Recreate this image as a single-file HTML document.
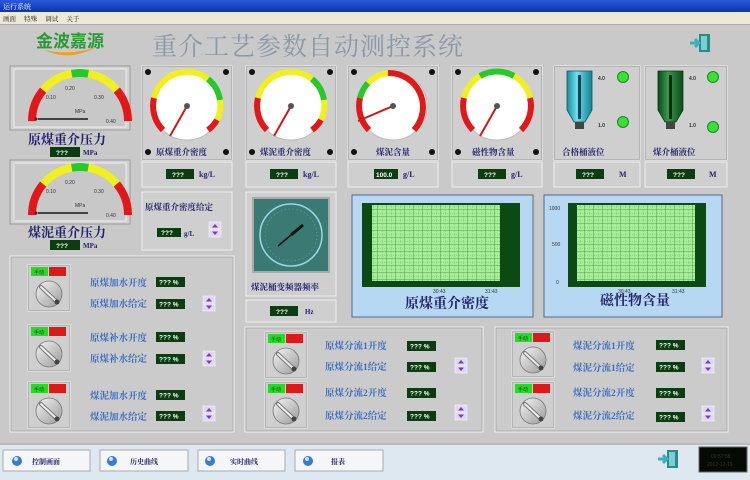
<!DOCTYPE html>
<html><head><meta charset="utf-8"><style>
html,body{margin:0;padding:0;width:750px;height:480px;overflow:hidden;background:#c9c9c9}
svg{display:block}
.t{font-family:"Liberation Serif","Noto Serif CJK SC",serif}
.lb{font-family:"Liberation Serif","Noto Serif CJK SC",serif;font-weight:bold;fill:#23236e}
.bl{font-family:"Liberation Serif","Noto Serif CJK SC",serif;fill:#3c6cc0;font-size:9.5px;font-weight:bold}
.v{font-family:"Liberation Sans",sans-serif;fill:#fff;font-size:6.5px;font-weight:bold}
.s{font-family:"Liberation Sans",sans-serif;fill:#333;font-size:5px}
</style></head><body>
<svg width="750" height="480" viewBox="0 0 750 480" xmlns="http://www.w3.org/2000/svg">
<defs>
<linearGradient id="tb" x1="0" y1="0" x2="0" y2="1"><stop offset="0" stop-color="#2a5ad8"/><stop offset="1" stop-color="#0a34b0"/></linearGradient>
<linearGradient id="kn" x1="0" y1="0" x2="1" y2="1"><stop offset="0" stop-color="#f4f4f4"/><stop offset="1" stop-color="#9a9a9a"/></linearGradient>
<linearGradient id="tk1" x1="0" y1="0" x2="1" y2="0"><stop offset="0" stop-color="#1a8a9a"/><stop offset=".4" stop-color="#6ae0f0"/><stop offset="1" stop-color="#168090"/></linearGradient>
<linearGradient id="tk2" x1="0" y1="0" x2="1" y2="0"><stop offset="0" stop-color="#0c4a1c"/><stop offset=".4" stop-color="#3a9a4a"/><stop offset="1" stop-color="#0c4a1c"/></linearGradient>
<pattern id="grid" width="9" height="7" patternUnits="userSpaceOnUse"><rect width="9" height="7" fill="#a6ee9a"/><path d="M9 0V7M0 7H9" stroke="#3e8a3a" stroke-width="0.8"/><path d="M4.5 0V7M0 3.5H9" stroke="#6ab860" stroke-width="0.4" stroke-dasharray="1 1"/></pattern>
<g id="knob">
<rect x="0" y="0" width="42" height="46" fill="#cfcfcf" stroke="#eee" stroke-width="1"/>
<rect x="0.5" y="0.5" width="41" height="45" fill="none" stroke="#999" stroke-width=".6"/>
<rect x="3" y="2" width="17" height="9" fill="#22dd22"/><text x="6" y="9" class="s" fill="#060">手动</text>
<rect x="21" y="2" width="17" height="9" fill="#dd1a1a"/>
<circle cx="21" cy="29" r="13" fill="url(#kn)" stroke="#777" stroke-width=".8"/>
<path d="M13 22 L28 36" stroke="#777" stroke-width="4" stroke-linecap="round"/>
<path d="M13 22 L28 36" stroke="#eee" stroke-width="2" stroke-linecap="round"/>
<circle cx="29" cy="37" r="2.5" fill="#444"/>
</g>
<g id="vbox"><rect x="0" y="0" width="29" height="10" fill="#0b3d10"/><text x="3" y="7.5" class="v">??? %</text></g>
<g id="arr"><rect x="0" y="0" width="12" height="7" fill="#e0d8f4" stroke="#fff" stroke-width=".5"/><path d="M3 5.5 L6 2 L9 5.5Z" fill="#7a3ac8"/><rect x="0" y="8" width="12" height="7" fill="#e0d8f4" stroke="#fff" stroke-width=".5"/><path d="M3 9.5 L6 13 L9 9.5Z" fill="#7a3ac8"/></g>
<g id="semi">
<rect x="0" y="0" width="120" height="64" fill="#d2d2d2" stroke="#9a9a9a"/>
<rect x="4" y="3" width="112" height="58" fill="#c8c8c8" stroke="#eee"/>
<path d="M22 55 A48 48 0 0 1 33.2 24.1" stroke="#e01818" stroke-width="8" fill="none"/>
<path d="M33.2 24.1 A48 48 0 0 1 61.7 7.7" stroke="#f0f020" stroke-width="8" fill="none"/>
<path d="M61.7 7.7 A48 48 0 0 1 78.3 7.7" stroke="#28c828" stroke-width="8" fill="none"/>
<path d="M78.3 7.7 A48 48 0 0 1 106.8 24.1" stroke="#f0f020" stroke-width="8" fill="none"/>
<path d="M106.8 24.1 A48 48 0 0 1 118 55" stroke="#e01818" stroke-width="8" fill="none"/>
<text x="55" y="24" class="s">0.20</text><text x="36" y="33" class="s">0.10</text><text x="84" y="33" class="s">0.30</text><text x="65" y="47" class="s">MPa</text><text x="96" y="57" class="s">0.40</text>
<path d="M28 53 H78" stroke="#444" stroke-width="2"/><circle cx="26" cy="53" r="1.5" fill="#333"/>
</g>
<g id="rg">
<rect x="0" y="0" width="90" height="94" fill="#cfcfcf" stroke="#eee"/>
<rect x="0.5" y="0.5" width="89" height="93" fill="none" stroke="#999" stroke-width=".6"/>
<circle cx="6" cy="6" r="3" fill="#111"/><circle cx="84" cy="6" r="3" fill="#111"/><circle cx="6" cy="86" r="3" fill="#111"/><circle cx="84" cy="86" r="3" fill="#111"/>
<circle cx="45" cy="40" r="34" fill="#fff" stroke="#bbb"/>
</g>
</defs>

<!-- title bar & menu -->
<rect x="0" y="0" width="750" height="12" fill="url(#tb)"/>
<text x="3" y="9" class="t" font-size="7" fill="#fff">运行系统</text>
<rect x="0" y="12" width="750" height="12" fill="#ece9d8"/>
<text x="3" y="21" class="t" font-size="6.5" fill="#222">画面　 特殊　 调试　 关于</text>
<rect x="0" y="24" width="750" height="1" fill="#aaa"/>

<!-- logo -->
<text x="36" y="47" font-family="Liberation Sans,'Noto Sans CJK SC',sans-serif" font-weight="bold" font-size="17" fill="#2a9a34">金波嘉源</text>
<path d="M44 50 Q70 62 96 47 Q72 56 44 50Z" fill="#f0a020"/>
<!-- title -->
<text x="152" y="55" class="t" font-size="25" fill="#8a98a8" letter-spacing="1">重介工艺参数自动测控系统</text>
<!-- exit icon -->
<g transform="translate(690,33)"><rect x="9" y="1" width="11" height="18" fill="#2a8a8a"/><rect x="11" y="3" width="6" height="14" fill="#7ad0d0"/><path d="M0 10 H9 M5 6 L9 10 L5 14" stroke="#3ab0c0" stroke-width="3" fill="none"/></g>

<!-- semi gauges -->
<use href="#semi" transform="translate(10,66)"/>
<text x="28" y="144" class="lb" font-size="13">原煤重介压力</text>
<rect x="50" y="147" width="30" height="10" fill="#0b3d10"/><text x="56" y="155" class="v">???</text><text x="83" y="155" class="lb" font-size="7">MPa</text>
<use href="#semi" transform="translate(10,160)"/>
<text x="28" y="237" class="lb" font-size="13">煤泥重介压力</text>
<rect x="50" y="240" width="30" height="10" fill="#0b3d10"/><text x="56" y="248" class="v">???</text><text x="83" y="248" class="lb" font-size="7">MPa</text>

<!-- round gauges -->
<g transform="translate(142,66)"><use href="#rg"/>
<path d="M21 64 A34 34 0 0 1 12 32" stroke="#e01818" stroke-width="6" fill="none"/>
<path d="M12 32 A34 34 0 0 1 66 13" stroke="#f0f020" stroke-width="6" fill="none"/>
<path d="M66 13 A34 34 0 0 1 78 34" stroke="#28c828" stroke-width="6" fill="none"/>
<path d="M78 34 A34 34 0 0 1 75 54" stroke="#f0f020" stroke-width="6" fill="none"/>
<path d="M75 54 A34 34 0 0 1 66 64" stroke="#e01818" stroke-width="6" fill="none"/>
<path d="M45 40 L28 70" stroke="#d01818" stroke-width="2"/><circle cx="45" cy="40" r="3" fill="#555"/>
<text x="14" y="89" class="lb" font-size="8.5">原煤重介密度</text></g>
<g transform="translate(246,66)"><use href="#rg"/>
<path d="M21 64 A34 34 0 0 1 12 32" stroke="#e01818" stroke-width="6" fill="none"/>
<path d="M12 32 A34 34 0 0 1 66 13" stroke="#f0f020" stroke-width="6" fill="none"/>
<path d="M66 13 A34 34 0 0 1 78 34" stroke="#28c828" stroke-width="6" fill="none"/>
<path d="M78 34 A34 34 0 0 1 75 54" stroke="#f0f020" stroke-width="6" fill="none"/>
<path d="M75 54 A34 34 0 0 1 66 64" stroke="#e01818" stroke-width="6" fill="none"/>
<path d="M45 40 L28 70" stroke="#d01818" stroke-width="2"/><circle cx="45" cy="40" r="3" fill="#555"/>
<text x="14" y="89" class="lb" font-size="8.5">煤泥重介密度</text></g>
<g transform="translate(348,66)"><use href="#rg"/>
<path d="M21 64 A34 34 0 0 1 12 32" stroke="#e01818" stroke-width="6" fill="none"/>
<path d="M12 32 A34 34 0 0 1 20 17" stroke="#28c828" stroke-width="6" fill="none"/>
<path d="M20 17 A34 34 0 0 1 40 7" stroke="#f0f020" stroke-width="6" fill="none"/>
<path d="M40 7 A34 34 0 0 1 66 64" stroke="#e01818" stroke-width="6" fill="none"/>
<path d="M45 40 L10 55" stroke="#d01818" stroke-width="2"/><circle cx="45" cy="40" r="3" fill="#555"/>
<text x="28" y="89" class="lb" font-size="8.5">煤泥含量</text></g>
<g transform="translate(452,66)"><use href="#rg"/>
<path d="M21 64 A34 34 0 0 1 12 32" stroke="#e01818" stroke-width="6" fill="none"/>
<path d="M12 32 A34 34 0 0 1 28 10" stroke="#f0f020" stroke-width="6" fill="none"/>
<path d="M28 10 A34 34 0 0 1 62 10" stroke="#28c828" stroke-width="6" fill="none"/>
<path d="M62 10 A34 34 0 0 1 78 32" stroke="#f0f020" stroke-width="6" fill="none"/>
<path d="M78 32 A34 34 0 0 1 69 64" stroke="#e01818" stroke-width="6" fill="none"/>
<path d="M45 40 L28 70" stroke="#d01818" stroke-width="2"/><circle cx="45" cy="40" r="3" fill="#555"/>
<text x="20" y="89" class="lb" font-size="8.5">磁性物含量</text></g>

<!-- tanks -->
<g transform="translate(554,66)">
<rect x="0" y="0" width="86" height="94" fill="#cfcfcf" stroke="#eee"/><rect x=".5" y=".5" width="85" height="93" fill="none" stroke="#999" stroke-width=".6"/>
<path d="M13 5 H38 V44 L31 56 H20 L13 44Z" fill="url(#tk1)" stroke="#0a5a6a" stroke-width=".8"/>
<rect x="24" y="9" width="3" height="44" fill="#084050"/><rect x="21" y="56" width="9" height="7" fill="#444"/>
<text x="44" y="14" class="s" font-weight="bold">4.0</text><text x="44" y="61" class="s" font-weight="bold">1.0</text>
<circle cx="69" cy="11" r="5.5" fill="#38e038" stroke="#1a8a1a"/><circle cx="69" cy="56" r="5.5" fill="#38e038" stroke="#1a8a1a"/>
<text x="8" y="89" class="lb" font-size="8.5">合格桶液位</text></g>
<g transform="translate(645,66)">
<rect x="0" y="0" width="82" height="94" fill="#cfcfcf" stroke="#eee"/><rect x=".5" y=".5" width="81" height="93" fill="none" stroke="#999" stroke-width=".6"/>
<path d="M13 5 H38 V44 L31 56 H20 L13 44Z" fill="url(#tk2)" stroke="#083a10" stroke-width=".8"/>
<rect x="24" y="9" width="3" height="44" fill="#052a08"/><rect x="21" y="56" width="9" height="7" fill="#444"/>
<text x="44" y="14" class="s" font-weight="bold">4.0</text><text x="44" y="61" class="s" font-weight="bold">1.0</text>
<circle cx="68" cy="11" r="5.5" fill="#38e038" stroke="#1a8a1a"/><circle cx="68" cy="61" r="5.5" fill="#38e038" stroke="#1a8a1a"/>
<text x="8" y="89" class="lb" font-size="8.5">煤介桶液位</text></g>

<!-- value row -->
<g font-size="7">
<rect x="142" y="162" width="90" height="25" fill="#cfcfcf" stroke="#eee"/><rect x="166" y="169" width="28" height="10" fill="#0b3d10"/><text x="172" y="177" class="v">???</text><text x="199" y="177" class="lb" font-size="8">kg/L</text>
<rect x="246" y="162" width="90" height="25" fill="#cfcfcf" stroke="#eee"/><rect x="270" y="169" width="28" height="10" fill="#0b3d10"/><text x="276" y="177" class="v">???</text><text x="303" y="177" class="lb" font-size="8">kg/L</text>
<rect x="348" y="162" width="90" height="25" fill="#cfcfcf" stroke="#eee"/><rect x="374" y="169" width="24" height="10" fill="#0b3d10"/><text x="376" y="177" class="v">100.0</text><text x="403" y="177" class="lb" font-size="8">g/L</text>
<rect x="452" y="162" width="90" height="25" fill="#cfcfcf" stroke="#eee"/><rect x="478" y="169" width="28" height="10" fill="#0b3d10"/><text x="484" y="177" class="v">???</text><text x="511" y="177" class="lb" font-size="8">g/L</text>
<rect x="554" y="162" width="86" height="25" fill="#cfcfcf" stroke="#eee"/><rect x="576" y="169" width="28" height="10" fill="#0b3d10"/><text x="582" y="177" class="v">???</text><text x="619" y="177" class="lb" font-size="8">M</text>
<rect x="645" y="162" width="82" height="25" fill="#cfcfcf" stroke="#eee"/><rect x="667" y="169" width="28" height="10" fill="#0b3d10"/><text x="673" y="177" class="v">???</text><text x="709" y="177" class="lb" font-size="8">M</text>
</g>

<!-- density set -->
<rect x="142" y="192" width="90" height="58" fill="#cfcfcf" stroke="#eee"/>
<text x="145" y="210" class="lb" font-size="8.5">原煤重介密度给定</text>
<rect x="157" y="228" width="24" height="9" fill="#0b3d10"/><text x="161" y="235" class="v">???</text><text x="184" y="236" class="lb" font-size="7">g/L</text>
<use href="#arr" transform="translate(209,222)"/>

<!-- frequency -->
<rect x="246" y="192" width="90" height="104" fill="#cfcfcf" stroke="#eee"/>
<rect x="252" y="197" width="78" height="76" fill="#aaa"/>
<rect x="254" y="199" width="74" height="72" fill="#3a7a72"/>
<circle cx="291" cy="235" r="31" fill="none" stroke="#9ad8e8" stroke-width="1.5"/>
<circle cx="291" cy="235" r="26" fill="none" stroke="#6abacc" stroke-width=".6" stroke-dasharray="1 3"/>
<path d="M291 235 L303 225" stroke="#111" stroke-width="3"/><path d="M291 235 L278 246" stroke="#111" stroke-width="1.5"/>
<text x="251" y="290" class="lb" font-size="8.5">煤泥桶变频器频率</text>
<rect x="246" y="300" width="90" height="22" fill="#cfcfcf" stroke="#eee"/>
<rect x="270" y="306" width="28" height="10" fill="#0b3d10"/><text x="276" y="314" class="v">???</text><text x="305" y="314" class="lb" font-size="7">Hz</text>

<!-- charts -->
<rect x="349" y="192" width="187" height="127" fill="#c8c8c8"/>
<rect x="352" y="195" width="181" height="122" fill="#b6d8f2" stroke="#5a6a88"/>
<rect x="362" y="203" width="158" height="84" fill="#0c4a14"/>
<rect x="372" y="205" width="128" height="76" fill="url(#grid)"/>
<text x="433" y="293" class="s" fill="#fff" font-size="5">30:43</text><text x="485" y="293" class="s" fill="#fff" font-size="5">31:43</text>
<text x="405" y="308" class="lb" font-size="14">原煤重介密度</text>
<rect x="541" y="192" width="184" height="127" fill="#c8c8c8"/>
<rect x="544" y="195" width="178" height="122" fill="#b6d8f2" stroke="#5a6a88"/>
<text x="549" y="210" class="s">1000</text><text x="552" y="246" class="s">500</text><text x="556" y="284" class="s">0</text>
<rect x="568" y="203" width="138" height="84" fill="#0c4a14"/>
<rect x="577" y="205" width="118" height="76" fill="url(#grid)"/>
<text x="618" y="293" class="s" fill="#fff" font-size="5">30:43</text><text x="672" y="293" class="s" fill="#fff" font-size="5">31:43</text>
<text x="600" y="305" class="lb" font-size="14">磁性物含量</text>

<!-- bottom left panel -->
<rect x="10" y="256" width="224" height="176" fill="#cbcbcb" stroke="#eee"/><rect x="11" y="257" width="222" height="174" fill="none" stroke="#999" stroke-width=".6"/>
<use href="#knob" transform="translate(28,265)"/><use href="#knob" transform="translate(28,325)"/><use href="#knob" transform="translate(28,382)"/>
<text x="90" y="286" class="bl">原煤加水开度</text><use href="#vbox" transform="translate(156,277)"/>
<text x="90" y="307" class="bl">原煤加水给定</text><use href="#vbox" transform="translate(156,299)"/><use href="#arr" transform="translate(203,296)"/>
<text x="90" y="341" class="bl">原煤补水开度</text><use href="#vbox" transform="translate(156,332)"/>
<text x="90" y="362" class="bl">原煤补水给定</text><use href="#vbox" transform="translate(156,354)"/><use href="#arr" transform="translate(203,351)"/>
<text x="90" y="399" class="bl">煤泥加水开度</text><use href="#vbox" transform="translate(156,390)"/>
<text x="90" y="420" class="bl">煤泥加水给定</text><use href="#vbox" transform="translate(156,411)"/><use href="#arr" transform="translate(203,406)"/>

<!-- bottom middle panel -->
<rect x="245" y="327" width="238" height="105" fill="#cbcbcb" stroke="#eee"/><rect x="246" y="328" width="236" height="103" fill="none" stroke="#999" stroke-width=".6"/>
<use href="#knob" transform="translate(265,332)"/><use href="#knob" transform="translate(265,382)"/>
<text x="325" y="349" class="bl">原煤分流1开度</text><use href="#vbox" transform="translate(407,341)"/>
<text x="325" y="370" class="bl">原煤分流1给定</text><use href="#vbox" transform="translate(407,362)"/><use href="#arr" transform="translate(455,358)"/>
<text x="325" y="396" class="bl">原煤分流2开度</text><use href="#vbox" transform="translate(407,388)"/>
<text x="325" y="419" class="bl">原煤分流2给定</text><use href="#vbox" transform="translate(407,411)"/><use href="#arr" transform="translate(455,405)"/>

<!-- bottom right panel -->
<rect x="495" y="327" width="233" height="105" fill="#cbcbcb" stroke="#eee"/><rect x="496" y="328" width="231" height="103" fill="none" stroke="#999" stroke-width=".6"/>
<use href="#knob" transform="translate(512,331)"/><use href="#knob" transform="translate(512,382)"/>
<text x="573" y="349" class="bl">煤泥分流1开度</text><use href="#vbox" transform="translate(656,340)"/>
<text x="573" y="371" class="bl">煤泥分流1给定</text><use href="#vbox" transform="translate(656,362)"/><use href="#arr" transform="translate(702,358)"/>
<text x="573" y="396" class="bl">煤泥分流2开度</text><use href="#vbox" transform="translate(656,388)"/>
<text x="573" y="419" class="bl">煤泥分流2给定</text><use href="#vbox" transform="translate(656,412)"/><use href="#arr" transform="translate(702,406)"/>

<!-- taskbar -->
<rect x="0" y="443" width="750" height="37" fill="#dde8f0"/>
<rect x="0" y="443" width="750" height="2" fill="#bbb"/>
<g font-size="7">
<rect x="3" y="450" width="87" height="21" fill="#f4f6f8" stroke="#aaa"/><circle cx="17" cy="461" r="5" fill="#3a7ad0"/><circle cx="16" cy="459" r="2" fill="#cfe6ff"/><text x="32" y="464" class="lb" font-size="7" fill="#222">控制画面</text>
<rect x="100" y="450" width="88" height="21" fill="#f4f6f8" stroke="#aaa"/><circle cx="112" cy="461" r="5" fill="#3a7ad0"/><circle cx="111" cy="459" r="2" fill="#cfe6ff"/><text x="130" y="464" class="lb" font-size="7" fill="#222">历史曲线</text>
<rect x="198" y="450" width="87" height="21" fill="#f4f6f8" stroke="#aaa"/><circle cx="210" cy="461" r="5" fill="#3a7ad0"/><circle cx="209" cy="459" r="2" fill="#cfe6ff"/><text x="230" y="464" class="lb" font-size="7" fill="#222">实时曲线</text>
<rect x="295" y="450" width="88" height="21" fill="#f4f6f8" stroke="#aaa"/><circle cx="308" cy="461" r="5" fill="#3a7ad0"/><circle cx="307" cy="459" r="2" fill="#cfe6ff"/><text x="331" y="464" class="lb" font-size="7" fill="#222">报表</text>
</g>
<g transform="translate(658,449)"><rect x="9" y="1" width="11" height="18" fill="#2a8a8a"/><rect x="11" y="3" width="6" height="14" fill="#7ad0d0"/><path d="M0 10 H9 M5 6 L9 10 L5 14" stroke="#3ab0c0" stroke-width="3" fill="none"/></g>
<rect x="699" y="447" width="48" height="25" fill="#050a05" stroke="#666"/>
<text x="711" y="458" class="s" fill="#9a9" font-size="4.5">09:57:58</text><text x="707" y="466" class="s" fill="#9a9" font-size="4.5">2012-12-19</text>
</svg>
</body></html>
